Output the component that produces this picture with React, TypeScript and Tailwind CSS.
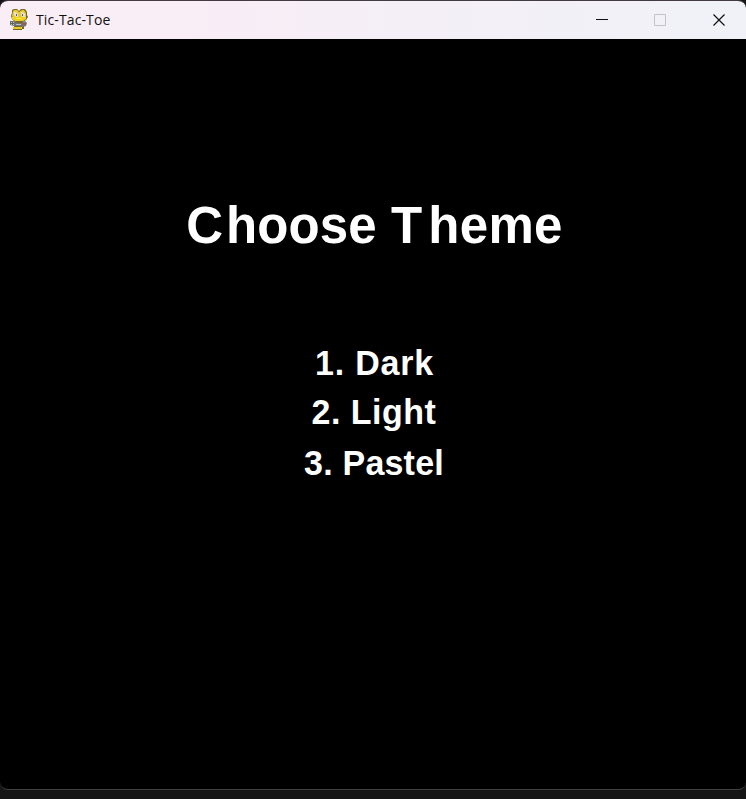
import type { ReactNode } from "react";

function SnakeIcon() {
  return (
    <svg width="20" height="22" viewBox="0 0 20 22" aria-hidden="true">
      <path d="M3 1 5 0h3l2 2 2-2h4l2 3v3l1 2-2 3-3 2 1 2v5H5v-5l1-2-3-3-1-3 1-3z" fill="#75692a" />
      <path d="M4 2 5 1h3l2 2 3-2h2l2 3v4l-2 2-5 2-5-2-2-3z" fill="#e8ca2a" />
      <path d="M5 3h2l2 2v3H7L5 6zM12 3h2l2 2v3h-3l-1-2z" fill="#e5e0df" />
      <path d="M7 5h1v2H7zM13 5h1v2h-1z" fill="#53606a" />
      <path d="M3 8h14v2l-3 2H6l-3-2z" fill="#ebd022" />
      <path d="M7 9h6v1H7z" fill="#ffe83a" />
      <path d="M1 12h4l3 2h5l3-2 2 2-1 3-3 1-4-1H5l-4-1z" fill="#74736f" />
      <path d="M2 13h3v3H2zM7 15h5v1H7z" fill="#b8c5bf" />
      <path d="M3 13h1v3H3zM1 14h4v1H1z" fill="#596461" />
      <path d="M14 14h2v2h-2z" fill="#be4b50" />
      <path d="M4 18h9v2H4z" fill="#e8c82a" />
      <path d="M4 20h9v1H4z" fill="#71641b" />
    </svg>
  );
}

function MenuItem({ children, className }: { children: ReactNode; className: string }) {
  return (
    <div className={`flex scale-y-[1.04] items-center justify-center whitespace-pre text-[34px] leading-[50px] ${className}`}>
      {children}
    </div>
  );
}

export default function App() {
  return (
    <main className="h-[799px] w-[746px] overflow-hidden bg-[#151515] font-['Liberation_Sans',Arial,sans-serif]">
      <section className="h-[790px] overflow-hidden rounded-[8px] border-t border-b border-t-[#423c42] border-b-[#414141] bg-black">
        <header className="flex h-[38px] items-center justify-between bg-linear-to-r from-[#f9edf6] from-25% via-[#f4eff7] via-55% to-[#f0f2f7]">
          <div className="flex items-center pl-[9px]">
            <SnakeIcon />
            <span className="ml-[7px] font-['Open_Sans',sans-serif] text-[14px] leading-5 tracking-[0.12px] text-[#111]">Tic-Tac-Toe</span>
          </div>
          <div className="flex h-full">
            <button aria-label="Minimize" className="flex w-[58px] items-center justify-center">
              <svg width="12" height="12" fill="none" stroke="#111"><path d="M0 5.5h12" /></svg>
            </button>
            <button aria-label="Maximize" className="flex w-[58px] items-center justify-center">
              <svg width="12" height="12" fill="none" stroke="#c2c1c7"><rect x=".5" y=".5" width="11" height="11" rx=".5" /></svg>
            </button>
            <button aria-label="Close" className="flex w-[57px] items-center justify-center pl-[2px]">
              <svg width="12" height="12" fill="none" stroke="#111" strokeWidth="1.2"><path d="m.5.5 11 11m0-11-11 11" /></svg>
            </button>
          </div>
        </header>
        <div className="flex h-[750px] flex-col pt-[156px] font-bold text-white">
          <h1 className="flex h-[60px] scale-y-[1.03] items-center justify-center whitespace-pre pl-[3px] text-[51px] leading-[60px]">
            <span className="tracking-[3px]">C</span>
            <span className="tracking-[0.1px]">hoose </span>
            <span className="tracking-[6.2px]">T</span>
            <span className="tracking-[0.3px]">heme</span>
          </h1>
          <div className="mt-[83px]">
            <MenuItem className="h-[49px] pl-[3px] tracking-[0.8px]">1. Dark</MenuItem>
            <MenuItem className="h-[50px] pl-[2px] tracking-[0.5px]">2. Light</MenuItem>
            <MenuItem className="h-[52px] pl-[2px] tracking-[0.2px]">3. Pastel</MenuItem>
          </div>
        </div>
      </section>
    </main>
  );
}
